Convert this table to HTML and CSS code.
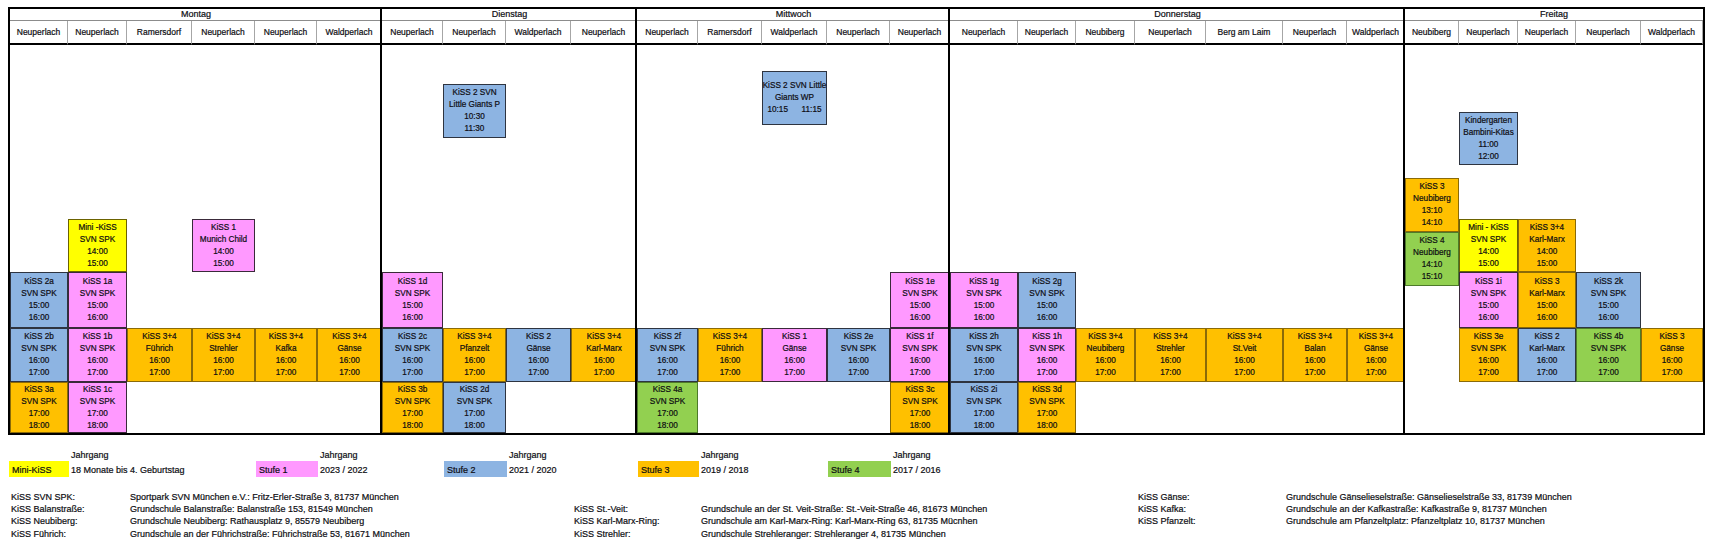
FILE: index.html
```html
<!DOCTYPE html>
<html lang="de">
<head>
<meta charset="utf-8">
<title>KiSS Stundenplan</title>
<link rel="stylesheet" href="styles.css">
</head>
<body>
<div class="sheet">
  <div class="day mo">Montag</div>
  <div class="day di">Dienstag</div>
  <div class="day mi">Mittwoch</div>
  <div class="day do">Donnerstag</div>
  <div class="day fr">Freitag</div>

  <div class="loc c1">Neuperlach</div>
  <div class="loc c2">Neuperlach</div>
  <div class="loc c3">Ramersdorf</div>
  <div class="loc c4">Neuperlach</div>
  <div class="loc c5">Neuperlach</div>
  <div class="loc c6">Waldperlach</div>
  <div class="loc c7">Neuperlach</div>
  <div class="loc c8">Neuperlach</div>
  <div class="loc c9">Waldperlach</div>
  <div class="loc c10">Neuperlach</div>
  <div class="loc c11">Neuperlach</div>
  <div class="loc c12">Ramersdorf</div>
  <div class="loc c13">Waldperlach</div>
  <div class="loc c14">Neuperlach</div>
  <div class="loc c15">Neuperlach</div>
  <div class="loc c16">Neuperlach</div>
  <div class="loc c17">Neuperlach</div>
  <div class="loc c18">Neubiberg</div>
  <div class="loc c19">Neuperlach</div>
  <div class="loc c20">Berg am Laim</div>
  <div class="loc c21">Neuperlach</div>
  <div class="loc c22">Waldperlach</div>
  <div class="loc c23">Neubiberg</div>
  <div class="loc c24">Neuperlach</div>
  <div class="loc c25">Neuperlach</div>
  <div class="loc c26">Neuperlach</div>
  <div class="loc c27">Waldperlach</div>

  <!-- Montag -->
  <div class="blk blue c1 t15"><span>KiSS 2a</span><span>SVN SPK</span><span>15:00</span><span>16:00</span></div>
  <div class="blk blue c1 t16"><span>KiSS 2b</span><span>SVN SPK</span><span>16:00</span><span>17:00</span></div>
  <div class="blk orange c1 t17"><span>KiSS 3a</span><span>SVN SPK</span><span>17:00</span><span>18:00</span></div>
  <div class="blk yellow c2 t14"><span>Mini -KiSS</span><span>SVN SPK</span><span>14:00</span><span>15:00</span></div>
  <div class="blk pink c2 t15"><span>KiSS 1a</span><span>SVN SPK</span><span>15:00</span><span>16:00</span></div>
  <div class="blk pink c2 t16"><span>KiSS 1b</span><span>SVN SPK</span><span>16:00</span><span>17:00</span></div>
  <div class="blk pink c2 t17"><span>KiSS 1c</span><span>SVN SPK</span><span>17:00</span><span>18:00</span></div>
  <div class="blk orange c3 t16"><span>KiSS 3+4</span><span>Führich</span><span>16:00</span><span>17:00</span></div>
  <div class="blk pink c4 t14"><span>KiSS 1</span><span>Munich Child</span><span>14:00</span><span>15:00</span></div>
  <div class="blk orange c4 t16"><span>KiSS 3+4</span><span>Strehler</span><span>16:00</span><span>17:00</span></div>
  <div class="blk orange c5 t16"><span>KiSS 3+4</span><span>Kafka</span><span>16:00</span><span>17:00</span></div>
  <div class="blk orange c6 t16"><span>KiSS 3+4</span><span>Gänse</span><span>16:00</span><span>17:00</span></div>

  <!-- Dienstag -->
  <div class="blk pink c7 t15"><span>KiSS 1d</span><span>SVN SPK</span><span>15:00</span><span>16:00</span></div>
  <div class="blk blue c7 t16"><span>KiSS 2c</span><span>SVN SPK</span><span>16:00</span><span>17:00</span></div>
  <div class="blk orange c7 t17"><span>KiSS 3b</span><span>SVN SPK</span><span>17:00</span><span>18:00</span></div>
  <div class="blk blue c8 tlgp"><span>KiSS 2 SVN</span><span>Little Giants P</span><span>10:30</span><span>11:30</span></div>
  <div class="blk orange c8 t16"><span>KiSS 3+4</span><span>Pfanzelt</span><span>16:00</span><span>17:00</span></div>
  <div class="blk blue c8 t17"><span>KiSS 2d</span><span>SVN SPK</span><span>17:00</span><span>18:00</span></div>
  <div class="blk blue c9 t16"><span>KiSS 2</span><span>Gänse</span><span>16:00</span><span>17:00</span></div>
  <div class="blk orange c10 t16"><span>KiSS 3+4</span><span>Karl-Marx</span><span>16:00</span><span>17:00</span></div>

  <!-- Mittwoch -->
  <div class="blk blue c11 t16"><span>KiSS 2f</span><span>SVN SPK</span><span>16:00</span><span>17:00</span></div>
  <div class="blk green c11 t17"><span>KiSS 4a</span><span>SVN SPK</span><span>17:00</span><span>18:00</span></div>
  <div class="blk orange c12 t16"><span>KiSS 3+4</span><span>Führich</span><span>16:00</span><span>17:00</span></div>
  <div class="blk blue c13 tlgwp"><span>KiSS 2 SVN Little</span><span>Giants WP</span><span class="pre">10:15      11:15</span></div>
  <div class="blk pink c13 t16"><span>KiSS 1</span><span>Gänse</span><span>16:00</span><span>17:00</span></div>
  <div class="blk blue c14 t16"><span>KiSS 2e</span><span>SVN SPK</span><span>16:00</span><span>17:00</span></div>
  <div class="blk pink c15 t15"><span>KiSS 1e</span><span>SVN SPK</span><span>15:00</span><span>16:00</span></div>
  <div class="blk pink c15 t16"><span>KiSS 1f</span><span>SVN SPK</span><span>16:00</span><span>17:00</span></div>
  <div class="blk orange c15 t17"><span>KiSS 3c</span><span>SVN SPK</span><span>17:00</span><span>18:00</span></div>

  <!-- Donnerstag -->
  <div class="blk pink c16 t15"><span>KiSS 1g</span><span>SVN SPK</span><span>15:00</span><span>16:00</span></div>
  <div class="blk blue c16 t16"><span>KiSS 2h</span><span>SVN SPK</span><span>16:00</span><span>17:00</span></div>
  <div class="blk blue c16 t17"><span>KiSS 2i</span><span>SVN SPK</span><span>17:00</span><span>18:00</span></div>
  <div class="blk blue c17 t15"><span>KiSS 2g</span><span>SVN SPK</span><span>15:00</span><span>16:00</span></div>
  <div class="blk pink c17 t16"><span>KiSS 1h</span><span>SVN SPK</span><span>16:00</span><span>17:00</span></div>
  <div class="blk orange c17 t17"><span>KiSS 3d</span><span>SVN SPK</span><span>17:00</span><span>18:00</span></div>
  <div class="blk orange c18 t16"><span>KiSS 3+4</span><span>Neubiberg</span><span>16:00</span><span>17:00</span></div>
  <div class="blk orange c19 t16"><span>KiSS 3+4</span><span>Strehler</span><span>16:00</span><span>17:00</span></div>
  <div class="blk orange c20 t16"><span>KiSS 3+4</span><span>St.Veit</span><span>16:00</span><span>17:00</span></div>
  <div class="blk orange c21 t16"><span>KiSS 3+4</span><span>Balan</span><span>16:00</span><span>17:00</span></div>
  <div class="blk orange c22 t16"><span>KiSS 3+4</span><span>Gänse</span><span>16:00</span><span>17:00</span></div>

  <!-- Freitag -->
  <div class="blk orange c23 tnb3"><span>KiSS 3</span><span>Neubiberg</span><span>13:10</span><span>14:10</span></div>
  <div class="blk green c23 tnb4"><span>KiSS 4</span><span>Neubiberg</span><span>14:10</span><span>15:10</span></div>
  <div class="blk blue c24 tkg"><span>Kindergarten</span><span>Bambini-Kitas</span><span>11:00</span><span>12:00</span></div>
  <div class="blk yellow c24 t14"><span>Mini - KiSS</span><span>SVN SPK</span><span>14:00</span><span>15:00</span></div>
  <div class="blk pink c24 t15"><span>KiSS 1i</span><span>SVN SPK</span><span>15:00</span><span>16:00</span></div>
  <div class="blk orange c24 t16"><span>KiSS 3e</span><span>SVN SPK</span><span>16:00</span><span>17:00</span></div>
  <div class="blk orange c25 t14"><span>KiSS 3+4</span><span>Karl-Marx</span><span>14:00</span><span>15:00</span></div>
  <div class="blk orange c25 t15"><span>KiSS 3</span><span>Karl-Marx</span><span>15:00</span><span>16:00</span></div>
  <div class="blk blue c25 t16"><span>KiSS 2</span><span>Karl-Marx</span><span>16:00</span><span>17:00</span></div>
  <div class="blk blue c26 t15"><span>KiSS 2k</span><span>SVN SPK</span><span>15:00</span><span>16:00</span></div>
  <div class="blk green c26 t16"><span>KiSS 4b</span><span>SVN SPK</span><span>16:00</span><span>17:00</span></div>
  <div class="blk orange c27 t16"><span>KiSS 3</span><span>Gänse</span><span>16:00</span><span>17:00</span></div>

  <div class="frame mo"></div>
  <div class="frame di"></div>
  <div class="frame mi"></div>
  <div class="frame do"></div>
</div>

<div class="legend">
  <div class="sw yellow c1">Mini-KiSS</div>
  <div class="jg c2">Jahrgang</div>
  <div class="yr c2">18 Monate bis 4. Geburtstag</div>
  <div class="sw pink c5">Stufe 1</div>
  <div class="jg c6">Jahrgang</div>
  <div class="yr c6">2023 / 2022</div>
  <div class="sw blue c8">Stufe 2</div>
  <div class="jg c9">Jahrgang</div>
  <div class="yr c9">2021 / 2020</div>
  <div class="sw orange c11">Stufe 3</div>
  <div class="jg c12">Jahrgang</div>
  <div class="yr c12">2019 / 2018</div>
  <div class="sw green c14">Stufe 4</div>
  <div class="jg c15">Jahrgang</div>
  <div class="yr c15">2017 / 2016</div>
</div>

<div class="addresses">
  <div class="ad r1 c1">KiSS SVN SPK:</div>
  <div class="ad r1 c3">Sportpark SVN München e.V.: Fritz-Erler-Straße 3, 81737 München</div>
  <div class="ad r1 c19">KiSS Gänse:</div>
  <div class="ad r1 c21">Grundschule Gänselieselstraße: Gänselieselstraße 33, 81739 München</div>

  <div class="ad r2 c1">KiSS Balanstraße:</div>
  <div class="ad r2 c3">Grundschule Balanstraße: Balanstraße 153, 81549 München</div>
  <div class="ad r2 c10">KiSS St.-Veit:</div>
  <div class="ad r2 c12">Grundschule an der St. Veit-Straße: St.-Veit-Straße 46, 81673 München</div>
  <div class="ad r2 c19">KiSS Kafka:</div>
  <div class="ad r2 c21">Grundschule an der Kafkastraße: Kafkastraße 9, 81737 München</div>

  <div class="ad r3 c1">KiSS Neubiberg:</div>
  <div class="ad r3 c3">Grundschule Neubiberg: Rathausplatz 9, 85579 Neubiberg</div>
  <div class="ad r3 c10">KiSS Karl-Marx-Ring:</div>
  <div class="ad r3 c12">Grundschule am Karl-Marx-Ring: Karl-Marx-Ring 63, 81735 Mücnhen</div>
  <div class="ad r3 c19">KiSS Pfanzelt:</div>
  <div class="ad r3 c21">Grundschule am Pfanzeltplatz: Pfanzeltplatz 10, 81737 München</div>

  <div class="ad r4 c1">KiSS Führich:</div>
  <div class="ad r4 c3">Grundschule an der Führichstraße: Führichstraße 53, 81671 München</div>
  <div class="ad r4 c10">KiSS Strehler:</div>
  <div class="ad r4 c12">Grundschule Strehleranger: Strehleranger 4, 81735 München</div>
</div>
</body>
</html>
```

FILE: styles.css
```css
html, body {
  margin: 0;
  background: #fff;
}
body {
  padding: 7px 0 0 8px;
  font-family: "Liberation Sans", Arial, sans-serif;
  color: #0d0d12;
  -webkit-text-stroke: 0.2px currentColor;
}

.sheet {
  display: grid;
  width: max-content;
  border: 2px solid #000;
  grid-template-columns:
    58px 59px 65px 63px 62px 65px
    61px 63px 65px 66px
    61px 64px 65px 63px 60px
    68px 58px 59px 71px 77px 64px 58px
    54px 59px 58px 65px 62px;
  grid-template-rows: 12px 24px 26px 13px 28px 13px 13px 27px 13px 41px 13px 40px 14px 42px 54px 51px;
}

.legend, .addresses {
  display: grid;
  width: max-content;
  grid-template-columns:
    60px 59px 65px 63px 62px 65px
    61px 63px 65px 66px
    61px 64px 65px 63px 60px
    68px 58px 59px 71px 77px 64px 58px
    54px 59px 58px 65px 64px;
}

/* columns */
.c1 { grid-column: 1; }  .c2 { grid-column: 2; }  .c3 { grid-column: 3; }
.c4 { grid-column: 4; }  .c5 { grid-column: 5; }  .c6 { grid-column: 6; }
.c7 { grid-column: 7; }  .c8 { grid-column: 8; }  .c9 { grid-column: 9; }
.c10 { grid-column: 10; } .c11 { grid-column: 11; } .c12 { grid-column: 12; }
.c13 { grid-column: 13; } .c14 { grid-column: 14; } .c15 { grid-column: 15; }
.c16 { grid-column: 16; } .c17 { grid-column: 17; } .c18 { grid-column: 18; }
.c19 { grid-column: 19; } .c20 { grid-column: 20; } .c21 { grid-column: 21; }
.c22 { grid-column: 22; } .c23 { grid-column: 23; } .c24 { grid-column: 24; }
.c25 { grid-column: 25; } .c26 { grid-column: 26; } .c27 { grid-column: 27; }

.mo { grid-column: 1 / 7; }
.di { grid-column: 7 / 11; }
.mi { grid-column: 11 / 16; }
.do { grid-column: 16 / 23; }
.fr { grid-column: 23 / 28; }

/* header */
.day {
  grid-row: 1;
  font-size: 9px;
  line-height: 11px;
  text-align: center;
  border-bottom: 1px solid #8c8c8c;
  box-sizing: border-box;
}
.loc {
  grid-row: 2;
  font-size: 8.5px;
  display: flex;
  align-items: center;
  justify-content: center;
  white-space: nowrap;
  border-right: 1px solid #a6a6a6;
  border-bottom: 2px solid #000;
  box-sizing: border-box;
  padding-bottom: 1px;
}

.frame {
  grid-row: 1 / -1;
  border-right: 2px solid #000;
  box-sizing: border-box;
}

/* time rows */
.t14 { grid-row: 11 / 13; }
.t15 { grid-row: 13 / 15; }
.t16 { grid-row: 15 / 16; }
.t17 { grid-row: 16 / 17; }
.tlgwp { grid-row: 4 / 7; }
.tlgp { grid-row: 5 / 8; }
.tkg { grid-row: 6 / 9; }
.tnb3 { grid-row: 10 / 12; }
.tnb4 { grid-row: 12 / 14; }

.blk {
  box-sizing: border-box;
  border: 1px solid #333;
  display: flex;
  flex-direction: column;
  align-items: center;
  justify-content: center;
  font-size: 8.2px;
  line-height: 12px;
  white-space: nowrap;
}
.blk span { display: block; }
.blk .pre { white-space: pre; }

.blue { background: #8db4e2; }
.pink { background: #ff99ff; }
.orange { background: #ffc000; }
.green { background: #92d050; }
.yellow { background: #ffff00; }

.blk.blue { border-color: #2e3440; }
.blk.pink { border-color: #3a2a3a; }
.blk.orange { border-color: #8a6a08; }
.blk.green { border-color: #4d7a2a; }
.blk.yellow { border-color: #6b6200; }

/* legend */
.legend {
  margin-top: 12px;
  grid-template-rows: 14px 16px;
  font-size: 9px;
  white-space: nowrap;
}
.sw {
  grid-row: 2;
  display: flex;
  align-items: flex-end;
  padding: 0 0 2px 3px;
  margin-left: 1px;
  margin-right: -1px;
}
.jg {
  grid-row: 1;
  display: flex;
  align-items: flex-end;
  padding: 0 0 1px 3px;
}
.yr {
  grid-row: 2;
  display: flex;
  align-items: flex-end;
  padding: 0 0 2px 3px;
}

/* addresses */
.addresses {
  margin-top: 14px;
  grid-template-rows: repeat(4, 12.2px);
  font-size: 9px;
  line-height: 12.2px;
  white-space: nowrap;
}
.ad { padding-left: 3px; }
.r1 { grid-row: 1; }
.r2 { grid-row: 2; }
.r3 { grid-row: 3; }
.r4 { grid-row: 4; }
```
